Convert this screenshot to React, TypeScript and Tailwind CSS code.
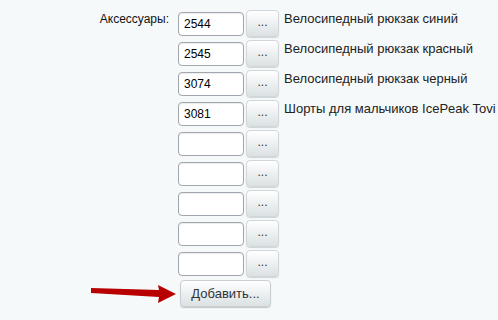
import React from "react";

const rows: { v: string; t: string }[] = [
  { v: "2544", t: "Велосипедный рюкзак синий" },
  { v: "2545", t: "Велосипедный рюкзак красный" },
  { v: "3074", t: "Велосипедный рюкзак черный" },
  { v: "3081", t: "Шорты для мальчиков IcePeak Tovi" },
  { v: "", t: "" },
  { v: "", t: "" },
  { v: "", t: "" },
  { v: "", t: "" },
  { v: "", t: "" },
];

export default function App() {
  return (
    <div
      className="w-[498px] h-[320px] bg-[#f5f9f9] text-[13px] text-black overflow-hidden relative"
      style={{ fontFamily: '"Liberation Sans", Arial, sans-serif' }}
    >
      <div className="flex pt-[10px]">
        <div className="w-[169px] text-right pt-[1px] text-[12px] leading-[16px] text-[#111]">Аксессуары:</div>
        <div className="ml-[9px] flex flex-col gap-[3px]">
          {rows.map((r, i) => (
            <div key={i} className="flex items-start h-[27px]">
              <div className="h-[27px] flex items-center">
                <input
                  readOnly
                  value={r.v}
                  className="w-[66px] h-[24px] bg-white border border-[#a0a7ae] rounded-[4px] px-[5px] text-[12px] text-black outline-none shadow-[inset_0_1px_1px_rgba(0,0,0,0.08)]"
                  style={{ fontFamily: '"Liberation Sans", Arial, sans-serif' }}
                />
              </div>
              <button className="ml-[2px] w-[33px] h-[27px] rounded-[4px] border border-[#d0d6d9] bg-gradient-to-b from-[#ffffff] to-[#dbe1e3] shadow-[0_1px_1px_rgba(0,0,0,0.15)] text-[#333] text-[12px] leading-none flex items-end justify-center pb-[8px]">
                ...
              </button>
              {r.t && <span className="ml-[5px] pt-[1px] leading-[16px] text-[#222]">{r.t}</span>}
            </div>
          ))}
          <div className="flex pl-[2px] pt-[0px]">
            <button className="w-[91px] h-[27px] rounded-[4px] border border-[#c8cfd3] bg-gradient-to-b from-[#ffffff] to-[#dbe1e3] shadow-[0_1px_1px_rgba(0,0,0,0.2)] text-[#2f3438] text-[13px]">
              Добавить...
            </button>
          </div>
        </div>
      </div>
      <svg className="absolute left-[88px] top-[280px]" width="92" height="26" viewBox="0 0 92 26">
        <polygon points="3,8 71,10 70,5 88,14 70,23 71,17 3,13" fill="#b80000" />
      </svg>
    </div>
  );
}
